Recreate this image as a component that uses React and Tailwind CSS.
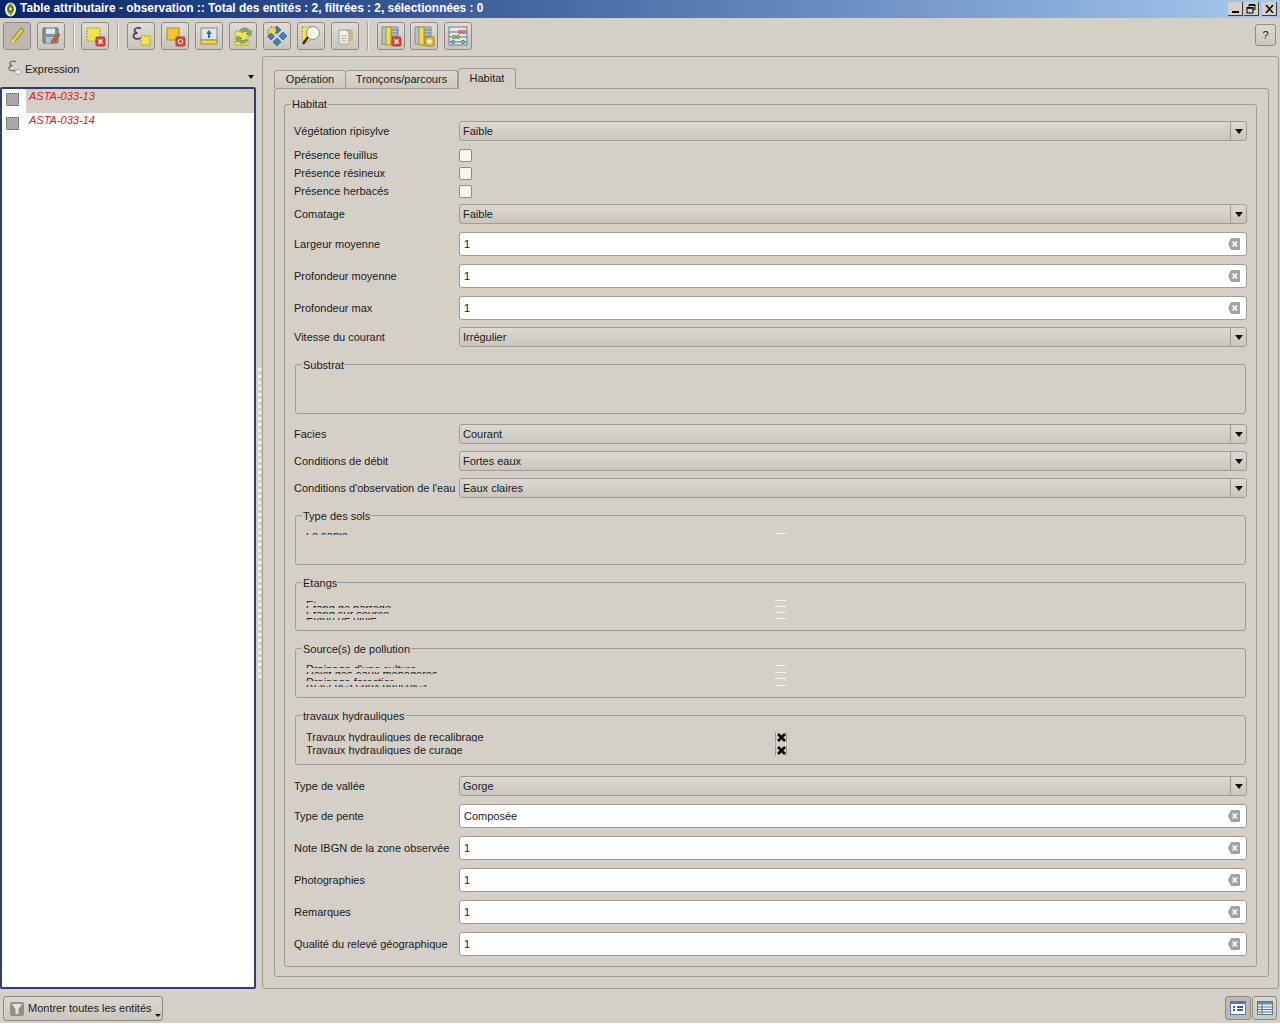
import React from "react";

const F = { fontFamily: '"Liberation Sans", Arial, sans-serif' };

function TB({ children, on, className = "" }) {
  return (
    <div className={`w-[28px] h-[28px] shrink-0 rounded-[3px] border border-[#8f8b84] flex items-center justify-center ${on ? "bg-[#bdb9b1]" : "bg-gradient-to-b from-[#e0ddd6] to-[#c9c5bd]"} ${className}`}>
      <svg width="22" height="22" viewBox="0 0 22 22">{children}</svg>
    </div>
  );
}
const Sep = () => <div className="w-[2px] h-[28px] mx-[4px] shrink-0 bg-[#f2f0ec] border-l border-[#a9a59d]" />;

const Dash = (p) => <rect fill="#f5e34a" stroke="#a89a30" strokeDasharray="2 1" {...p} />;
const RedBadge = () => (
  <g>
    <rect x="12" y="12" width="9" height="9" rx="1" fill="#d8473f" stroke="#a8403a" />
    <path d="M14.5 14.5l4 4M18.5 14.5l-4 4" stroke="#fff" strokeWidth="1.5" />
  </g>
);

function Combo({ value, className = "" }) {
  return (
    <div className={`h-[20px] flex-1 flex border border-[#a09c94] rounded-[3px] bg-gradient-to-b from-[#dcd9d2] to-[#cac6be] ${className}`}>
      <div className="flex-1 pl-[3px] text-[11px] leading-[18px] text-[#1a1a1a]">{value}</div>
      <div className="w-[16px] border-l border-[#a09c94] flex items-center justify-center">
        <svg width="8" height="5" viewBox="0 0 8 5"><path d="M0 0h8L4 5z" fill="#111" /></svg>
      </div>
    </div>
  );
}

function LineEdit({ value }) {
  return (
    <div className="h-[24px] flex-1 flex items-center bg-white border border-[#a09c94] rounded-[3px] pl-[4px] pr-[6px] text-[11px] text-[#1a1a1a]">
      <span className="flex-1 pt-[1px]">{value}</span>
      <svg width="12" height="12" viewBox="0 0 12 12">
        <path d="M3 0h8a1 1 0 0 1 1 1v10a1 1 0 0 1-1 1H3L0 6z" fill="#a3a3a3" />
        <path d="M4.5 3.500l4.500 5M9 3.500L4.500 8.500" stroke="#fff" strokeWidth="1.6" />
      </svg>
    </div>
  );
}

function Row({ label, className = "", children }) {
  return (
    <div className={`flex items-center pl-[9px] pr-[9px] ${className}`}>
      <div className="w-[165px] shrink-0 text-[11px] text-[#1a1a1a] whitespace-nowrap leading-[16px]">{label}</div>
      {children}
    </div>
  );
}

function Check({ label, className = "" }) {
  return (
    <div className={`flex items-center h-[12px] pl-[9px] ${className}`}>
      <div className="w-[165px] shrink-0 text-[11px] text-[#1a1a1a] whitespace-nowrap leading-[12px]">{label}</div>
      <div className="w-[13px] h-[13px] rounded-[2px] border border-[#8f8b84] bg-[#f6f5f2]" />
    </div>
  );
}

function Group({ title, className = "", children }) {
  return (
    <div className={`relative mx-[10px] border border-[#a09c94] rounded-[3px] ${className}`}>
      <span className="absolute left-[6px] top-[-8px] px-[1px] bg-[#d4d0c8] text-[11px] leading-[16px] text-[#1a1a1a] whitespace-nowrap">{title}</span>
      {children}
    </div>
  );
}

/* A row squeezed by its group: only a thin slice of its text and box shows. */
function Slice({ text, h, shift, className = "" }) {
  return (
    <div className={`flex pl-[10px] overflow-hidden ${className}`} style={{ height: h }}>
      <div className="w-[469px] shrink-0 overflow-hidden text-[11px] leading-[14px] text-[#1a1a1a] whitespace-nowrap">
        <div style={{ marginTop: shift }}>{text}</div>
      </div>
      <div className="w-[11px] h-[1px] bg-[#f4f3f0]" />
    </div>
  );
}

function Travaux({ text, className = "" }) {
  return (
    <div className={`h-[13px] flex items-start overflow-hidden pl-[10px] ${className}`}>
      <div className="w-[469px] h-[11px] overflow-hidden shrink-0 text-[11px] leading-[12px] text-[#1a1a1a] whitespace-nowrap">{text}</div>
      <div className="w-[12px] h-[11px] mt-[1px] flex items-center justify-center border-x border-[#a09c94]">
        <svg width="9" height="9" viewBox="0 0 9 9"><path d="M1 1l7 7M8 1L1 8" stroke="#000" strokeWidth="2.6" /></svg>
      </div>
    </div>
  );
}

export default function App() {
  return (
    <div style={F} className="w-[1280px] h-[1023px] overflow-hidden bg-[#d4d0c8] flex flex-col text-[#1a1a1a]">
      {/* Title bar */}
      <div className="h-[18px] shrink-0 flex items-center bg-gradient-to-r from-[#0a246a] to-[#a6caf0] pl-[3px] pr-[3px]">
        <svg width="15" height="15" viewBox="0 0 15 15" className="shrink-0">
          <ellipse cx="7.5" cy="7.5" rx="5.5" ry="7" fill="#f0f0e0" />
          <path d="M7.5 1C4 3 3 7 5 11l3 3 1-2c3-3 3-8-1.5-11z" fill="#6fae2a" />
          <circle cx="7.5" cy="7" r="2.4" fill="#e8d234" stroke="#1c1c1c" strokeWidth=".8" />
        </svg>
        <span className="ml-[2px] flex-1 text-[11.9px] font-bold text-white whitespace-nowrap">Table attributaire - observation :: Total des entités : 2, filtrées : 2, sélectionnées : 0</span>
        <div className="flex gap-[1px]">
          <div className="w-[15px] h-[14px] bg-[#d4d0c8] border-r border-b border-[#404040] flex items-end justify-center pb-[2px]"><div className="w-[7px] h-[2px] bg-black" /></div>
          <div className="w-[15px] h-[14px] bg-[#d4d0c8] border-r border-b border-[#404040] flex items-center justify-center">
            <svg width="10" height="10" viewBox="0 0 10 10" fill="none" stroke="#000"><path d="M3 2.5V.5h6v5H7" /><rect x="1" y="3.5" width="6" height="5.5" /><path d="M1 4h6M3 1h6" strokeWidth="1.4" /></svg>
          </div>
          <div className="ml-[2px] w-[15px] h-[14px] bg-[#d4d0c8] border-r border-b border-[#404040] flex items-center justify-center">
            <svg width="9" height="8" viewBox="0 0 9 8"><path d="M1 0l7 8M8 0L1 8" stroke="#000" strokeWidth="1.5" /></svg>
          </div>
        </div>
      </div>

      {/* Toolbar */}
      <div className="h-[38px] shrink-0 flex items-start pt-[4px] pl-[3px] pr-[4px]">
        <TB on>
          <path d="M5 19l1-5L15 3l3 2.5L9 17z" fill="#e6c84a" stroke="#8d7a28" />
          <path d="M5 19l1-5 3 3z" fill="#f0d8a8" />
        </TB>
        <TB className="ml-[6px]">
          <rect x="2" y="2" width="17" height="17" rx="1" fill="#e6dc8a" />
          <rect x="3" y="3" width="15" height="15" rx="1" fill="#7f93a8" stroke="#56687c" />
          <rect x="6" y="3.500" width="9" height="5.500" fill="#dfe6ec" />
          <rect x="6" y="12" width="8" height="6" fill="#b4c0cc" />
          <path d="M11 18l1-3 6-7 2 2-6 7z" fill="#d3622c" stroke="#91401b" strokeWidth=".6" />
        </TB>
        <div className="ml-[4px]"><Sep /></div>
        <TB className="ml-[2px]">
          <Dash x="3" y="3" width="13" height="13" />
          <RedBadge />
        </TB>
        <div className="ml-[4px]"><Sep /></div>
        <TB className="ml-[4px]">
          <path d="M11 3.500C8 2 4.500 3 4.500 5.500c0 1.500 1.200 2.300 3 2.500-2.300 0-4 1.200-4 3.200 0 2.800 4.500 3.500 7.500 1.800" fill="none" stroke="#5a4470" strokeWidth="1.800" />
          <Dash x="11" y="11" width="9" height="9" />
        </TB>
        <TB className="ml-[6px]">
          <rect x="3" y="3" width="12" height="12" fill="#f1c92c" stroke="#a8902a" />
          <rect x="12" y="12" width="9" height="9" rx="1" fill="#d8473f" stroke="#a8403a" />
          <circle cx="16.5" cy="16.5" r="2.2" fill="none" stroke="#fff" />
        </TB>
        <TB className="ml-[6px]">
          <rect x="3" y="3" width="16" height="12" fill="#dfe5ea" stroke="#7f8b96" />
          <rect x="3" y="15" width="16" height="4" fill="#f1d54a" stroke="#a38f25" />
          <path d="M11 5l3 4h-2v4h-2V9H8z" fill="#2f6f96" />
        </TB>
        <TB className="ml-[6px]">
          <Dash x="3" y="6" width="13" height="14" />
          <path d="M8 5a6 6 0 0 1 10 1l2-1-1 6-5-2 2-1a4 4 0 0 0-6 0z" fill="#7faa6a" stroke="#5c8a4a" strokeWidth=".5" />
          <path d="M16 15a6 6 0 0 1-10 1l-2 1 1-6 5 2-2 1a4 4 0 0 0 6 0z" fill="#7faa6a" stroke="#5c8a4a" strokeWidth=".5" />
        </TB>
        <TB className="ml-[6px]">
          <path d="M11 1l4 4-4 4-4-4z" fill="#3f7fc0" stroke="#24527f" strokeWidth=".6" />
          <path d="M5 2l5 0 0 5-5 5-3-3 0-4z" fill="#f1d54a" stroke="#555" strokeDasharray="1 1" />
          <path d="M5 8l3.500 3.500L5 15l-3.500-3.500zM17 7l4 4-4 4-4-4z" fill="#3f7fc0" stroke="#24527f" strokeWidth=".6" />
          <path d="M11 13l4 4-4 4-4-4z" fill="#3f7fc0" stroke="#24527f" strokeWidth=".6" />
        </TB>
        <TB className="ml-[6px]">
          <Dash x="2" y="2" width="8" height="14" />
          <circle cx="13" cy="8" r="6.500" fill="#f4f4ee" stroke="#8b8b80" />
          <path d="M8 12l-5 7" stroke="#3a2c20" strokeWidth="2.4" />
        </TB>
        <TB className="ml-[6px]">
          <path d="M12 4h5l2 2v10h-7z" fill="#c6b98e" />
          <path d="M5 5h7l3 3v11H5z" fill="#f0eee8" stroke="#a6a297" />
          <path d="M7 11h6M7 13.500h6M7 16h6" stroke="#b5b1a6" />
        </TB>
        <div className="ml-[4px]"><Sep /></div>
        <TB className="ml-[4px]">
          <rect x="2" y="2" width="16" height="17" fill="#b8c2cc" stroke="#7f8b96" />
          <rect x="6" y="2" width="5" height="18" fill="#f1e03a" stroke="#a38f25" />
          <path d="M11 5h7M11 8h7M11 11h7" stroke="#6f7b86" />
          <RedBadge />
        </TB>
        <TB className="ml-[5px]">
          <rect x="2" y="2" width="16" height="17" fill="#b8c2cc" stroke="#7f8b96" />
          <rect x="6" y="2" width="5" height="18" fill="#f1e03a" stroke="#a38f25" />
          <path d="M11 5h7M11 8h7M11 11h7" stroke="#6f7b86" />
          <rect x="12" y="12" width="9" height="9" rx="1" fill="#e6b93a" stroke="#a37f20" />
          <path d="M16.500 13.500l1 2h2l-1.500 1.500.5 2-2-1-2 1 .5-2-1.500-1.500h2z" fill="#fff" />
        </TB>
        <TB className="ml-[6px]">
          <rect x="2" y="2" width="18" height="18" fill="#e8e6df" stroke="#6f7b86" />
          <path d="M2 7h18M2 12h18M2 17h18" stroke="#5a7890" />
          <circle cx="13" cy="7" r="1.700" fill="none" stroke="#c8504a" /><circle cx="17" cy="7" r="1.700" fill="none" stroke="#c8504a" />
          <circle cx="7" cy="12" r="1.700" fill="none" stroke="#5a9a4a" /><circle cx="11" cy="12" r="1.700" fill="none" stroke="#5a9a4a" />
          <circle cx="6" cy="17" r="1.700" fill="none" stroke="#3f7fc0" /><circle cx="16" cy="17" r="1.700" fill="none" stroke="#3f7fc0" />
        </TB>
        <div className="flex-1" />
        <div className="w-[21px] h-[22px] mt-[2px] rounded-[3px] border border-[#8f8b84] bg-gradient-to-b from-[#dcd9d2] to-[#cac6be] text-[11px] leading-[20px] text-center">?</div>
      </div>

      {/* Main */}
      <div className="h-[933px] shrink-0 flex">
        {/* Left panel */}
        <div className="w-[256px] shrink-0 flex flex-col">
          <div className="h-[31px] shrink-0 relative flex items-start pl-[7px] pt-[4px]">
            <svg width="14" height="16" viewBox="0 0 14 16" className="shrink-0">
              <path d="M9 1.500C6 .5 3 1.200 3 3.500c0 1.300 1 2 2.500 2.200-2 0-3.500 1-3.500 2.800 0 2.500 4 3 6.500 1.500" fill="none" stroke="#6a6470" strokeWidth="1.200" />
              <circle cx="11" cy="12" r="2.500" fill="#f4f4ee" stroke="#a9a59a" />
            </svg>
            <span className="ml-[4px] text-[11px] leading-[16px] mt-[1px]">Expression</span>
            <svg width="6" height="4" viewBox="0 0 6 4" className="absolute right-[2px] top-[19px]"><path d="M0 0h6L3 4z" fill="#111" /></svg>
          </div>
          <div className="flex-1 bg-white border-2 border-[#2d3f6f] rounded-[2px] flex flex-col">
            <div className="h-[24px] flex">
              <div className="w-[24px] pl-[4px] pt-[4px]"><div className="w-[13px] h-[13px] bg-[#a9a9a9] border border-dotted border-[#555]" /></div>
              <div className="flex-1 bg-[#d4d0c8] text-[11px] italic leading-[14px] text-[#e0181c] pl-[3px]">ASTA-033-13</div>
            </div>
            <div className="h-[24px] flex">
              <div className="w-[24px] pl-[4px] pt-[4px]"><div className="w-[13px] h-[13px] bg-[#a9a9a9] border border-dotted border-[#555]" /></div>
              <div className="flex-1 text-[11px] italic leading-[14px] text-[#e0181c] pl-[3px]">ASTA-033-14</div>
            </div>
          </div>
        </div>

        {/* Splitter */}
        <div className="w-[6px] shrink-0 flex items-center justify-center">
          <div className="w-[3px] h-[310px] border-l-[3px] border-dotted border-[#f2f1ee]" />
        </div>

        {/* Right panel */}
        <div className="flex-1 mr-[1px] border border-[#a09c94] rounded-[3px] pl-[11px] pr-[9px] pt-[11px] pb-[11px] flex flex-col">
          <div className="h-[20px] shrink-0 flex items-end relative z-10">
            <div className="w-[72px] h-[18px] rounded-t-[3px] border border-b-0 border-[#a09c94] text-center text-[11px] leading-[17px] bg-gradient-to-b from-[#dcd9d2] to-[#cdc9c1]">Opération</div>
            <div className="w-[112px] h-[18px] rounded-t-[3px] border border-l-0 border-b-0 border-[#a09c94] text-center text-[11px] leading-[17px] bg-gradient-to-b from-[#dcd9d2] to-[#cdc9c1]">Tronçons/parcours</div>
            <div className="w-[58px] h-[21px] -mb-[1px] rounded-t-[3px] border border-b-0 border-[#a09c94] bg-[#d4d0c8] text-center text-[11px] leading-[18px]">Habitat</div>
          </div>
          <div className="flex-1 border border-[#a09c94] rounded-[3px] pt-[15px] pl-[9px] pr-[11px] pb-[9px]">
            <div className="relative h-full border border-[#a09c94] rounded-[3px] pt-[16px]">
              <span className="absolute left-[6px] top-[-9px] px-[1px] bg-[#d4d0c8] text-[11px] leading-[16px]">Habitat</span>

              <Row label="Végétation ripisylve"><Combo value="Faible" /></Row>
              <Check label="Présence feuillus" className="mt-[8px]" />
              <Check label="Présence résineux" className="mt-[6px]" />
              <Check label="Présence herbacés" className="mt-[6px]" />
              <Row label="Comatage" className="mt-[7px]"><Combo value="Faible" /></Row>
              <Row label="Largeur moyenne" className="mt-[8px]"><LineEdit value="1" /></Row>
              <Row label="Profondeur moyenne" className="mt-[8px]"><LineEdit value="1" /></Row>
              <Row label="Profondeur max" className="mt-[8px]"><LineEdit value="1" /></Row>
              <Row label="Vitesse du courant" className="mt-[7px]"><Combo value="Irrégulier" /></Row>

              <Group title="Substrat" className="mt-[17px] h-[50px]" />

              <Row label="Facies" className="mt-[10px]"><Combo value="Courant" /></Row>
              <Row label="Conditions de débit" className="mt-[7px]"><Combo value="Fortes eaux" /></Row>
              <Row label="Conditions d'observation de l'eau" className="mt-[7px]"><Combo value="Eaux claires" /></Row>

              <Group title="Type des sols" className="mt-[17px] h-[50px] pt-[17px]">
                <Slice text="Le sable" h={2} shift={-5} />
              </Group>
              <Group title="Etangs" className="mt-[17px] h-[49px] pt-[17px]">
                <Slice text="Etang sur cours" h={3} shift={-2} className="mb-[3px]" />
                <Slice text="Etang de barrage" h={2} shift={-5} className="mb-[4px]" />
                <Slice text="Etang sur source" h={2} shift={-5} className="mb-[4px]" />
                <Slice text="Etang de pluie" h={2} shift={-7} />
              </Group>
              <Group title="Source(s) de pollution" className="mt-[17px] h-[50px] pt-[16px]">
                <Slice text="Drainage d'une culture" h={3} shift={-3} className="mb-[4px]" />
                <Slice text="Rejet des eaux ménagères" h={2} shift={-5} className="mb-[4px]" />
                <Slice text="Drainage forestier" h={3} shift={-3} className="mb-[4px]" />
                <Slice text="Rejet des eaux agricoles" h={2} shift={-8} />
              </Group>
              <Group title="travaux hydrauliques" className="mt-[17px] h-[50px] pt-[15px]">
                <Travaux text="Travaux hydrauliques de recalibrage" />
                <Travaux text="Travaux hydrauliques de curage" />
              </Group>

              <Row label="Type de vallée" className="mt-[11px]"><Combo value="Gorge" /></Row>
              <Row label="Type de pente" className="mt-[8px]"><LineEdit value="Composée" /></Row>
              <Row label="Note IBGN de la zone observée" className="mt-[8px]"><LineEdit value="1" /></Row>
              <Row label="Photographies" className="mt-[8px]"><LineEdit value="1" /></Row>
              <Row label="Remarques" className="mt-[8px]"><LineEdit value="1" /></Row>
              <Row label="Qualité du relevé géographique" className="mt-[8px]"><LineEdit value="1" /></Row>
            </div>
          </div>
        </div>
      </div>

      {/* Bottom bar */}
      <div className="flex-1 flex items-start pl-[3px] pr-[3px] pt-[7px]">
        <div className="w-[160px] h-[25px] rounded-[3px] border border-[#8f8b84] bg-gradient-to-b from-[#dcd9d2] to-[#cac6be] relative flex items-center pl-[6px]">
          <svg width="14" height="14" viewBox="0 0 14 14" className="shrink-0"><rect width="14" height="14" rx="2" fill="#8f8f8c" /><path d="M2 2h10L8.500 7v5h-3V7z" fill="#e6e5e0" /></svg>
          <span className="ml-[4px] text-[11px] whitespace-nowrap">Montrer toutes les entités</span>
          <svg width="6" height="3" viewBox="0 0 6 3" className="absolute right-[1px] bottom-[3px]"><path d="M0 0h6L3 3z" fill="#111" /></svg>
        </div>
        <div className="flex-1" />
        <div className="w-[26px] h-[24px] rounded-[3px] border border-[#8f8b84] bg-[#bdb9b1] flex items-center justify-center">
          <svg width="16" height="14" viewBox="0 0 16 14"><rect x=".5" y=".5" width="15" height="13" fill="#fff" stroke="#3f7fc0" /><rect x="1" y="1" width="14" height="2" fill="#3f7fc0" /><path d="M3 6h2M7 6h6M3 9h2M7 9h6" stroke="#0a2a5a" strokeWidth="1.600" /></svg>
        </div>
        <div className="ml-[1px] w-[25px] h-[24px] rounded-[3px] border border-[#8f8b84] bg-gradient-to-b from-[#dcd9d2] to-[#cac6be] flex items-center justify-center">
          <svg width="16" height="14" viewBox="0 0 16 14"><rect x=".5" y=".5" width="15" height="13" fill="#eef1f3" stroke="#5a7890" /><rect x="1" y="1" width="14" height="2.500" fill="#6f8ba0" /><path d="M1 6h14M1 8.500h14M1 11h14M5 3v10" stroke="#5a7890" /></svg>
        </div>
      </div>
    </div>
  );
}
